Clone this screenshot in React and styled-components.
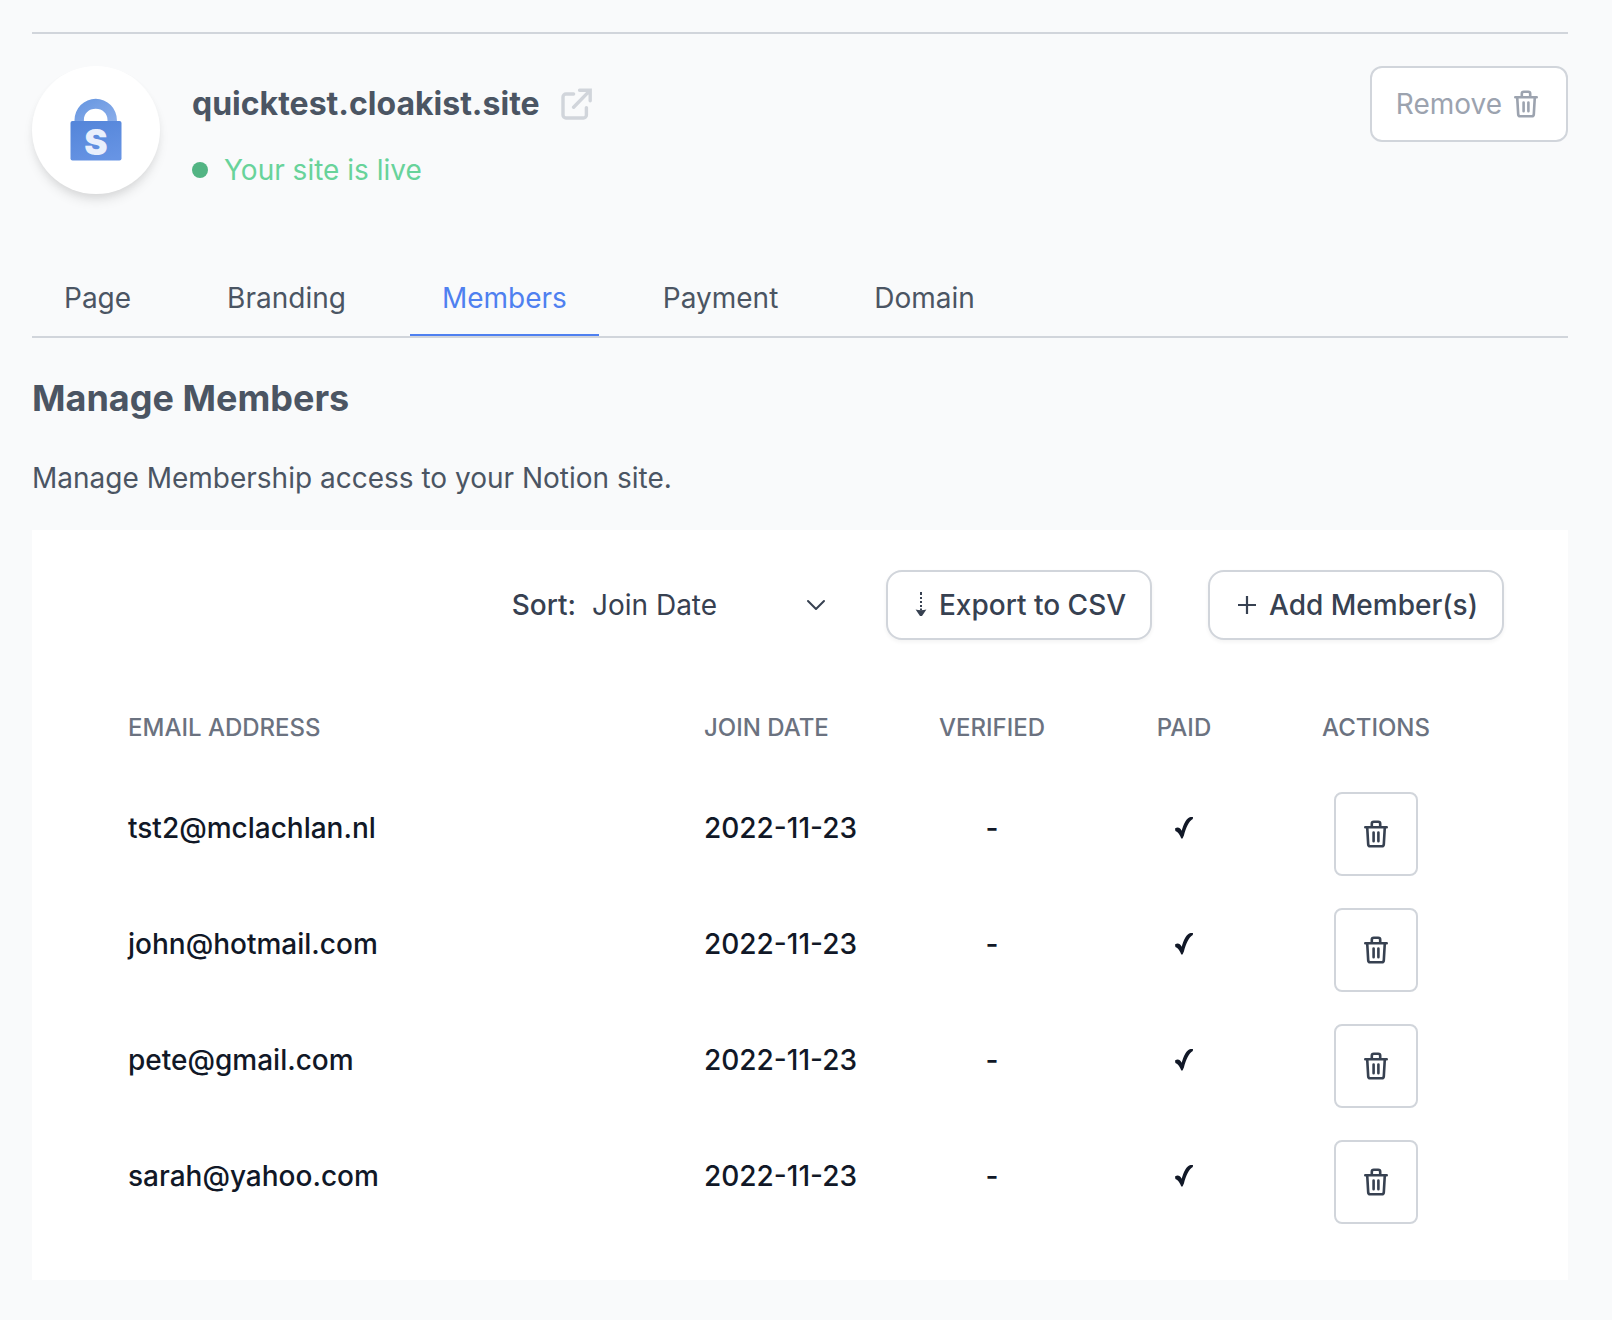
import { useState } from "react";
import styled, { createGlobalStyle } from "styled-components";

const GlobalStyle = createGlobalStyle`
  *, *::before, *::after {
    box-sizing: border-box;
  }
  body {
    margin: 0;
    background: #f9fafb;
    color: #4b5563;
    font-family: Inter, "Liberation Sans", sans-serif;
    font-size: 28px;
    line-height: 40px;
    font-optical-sizing: none;
  }
  button, select {
    font-family: inherit;
    font-size: inherit;
    line-height: inherit;
  }
`;

const Page = styled.div`
  padding: 32px 44px 40px 32px;
`;

const SiteHeader = styled.header`
  display: flex;
  align-items: flex-start;
  gap: 32px;
  padding: 32px 0 64px;
  border-top: 2px solid #d1d5db;
`;

const Avatar = styled.div`
  display: flex;
  align-items: center;
  justify-content: center;
  width: 128px;
  height: 128px;
  border-radius: 50%;
  background: #fff;
  box-shadow: 0 8px 12px -2px rgba(0, 0, 0, 0.1), 0 4px 8px -2px rgba(0, 0, 0, 0.06);
`;

const SiteInfo = styled.div`
  display: flex;
  flex: 1;
  flex-direction: column;
  gap: 26px;
  padding-top: 18px;
`;

const SiteName = styled.h1`
  display: flex;
  align-items: center;
  gap: 20px;
  margin: 0;
  font-size: 32px;
  font-weight: 700;
`;

const IconLink = styled.a`
  display: flex;
  color: #d1d5db;
`;

const Status = styled.p`
  display: flex;
  align-items: center;
  gap: 16px;
  margin: 0;
  color: #68d39a;
`;

const Dot = styled.span`
  width: 16px;
  height: 16px;
  border-radius: 50%;
  background: #52b483;
`;

const RemoveButton = styled.button`
  display: flex;
  align-items: center;
  gap: 12px;
  height: 76px;
  padding: 0 28px 0 24px;
  border: 2px solid #d1d5db;
  border-radius: 12px;
  background: #fff;
  color: #9ca3af;
  cursor: pointer;
`;

const Tabs = styled.nav`
  display: flex;
  gap: 32px;
  border-bottom: 2px solid #d1d5db;
`;

const Tab = styled.a`
  padding: 20px 32px 16px;
  border-bottom: 2px solid ${(props) => (props.$active ? "#4f80f0" : "transparent")};
  color: ${(props) => (props.$active ? "#4f80f0" : "#4b5563")};
  text-decoration: none;
`;

const Title = styled.h2`
  margin: 40px 0;
  font-size: 36px;
  font-weight: 700;
`;

const Description = styled.p`
  margin: 0 0 32px;
`;

const Card = styled.section`
  padding: 40px 64px 46px;
  background: #fff;
`;

const Toolbar = styled.div`
  display: flex;
  align-items: center;
  justify-content: flex-end;
  gap: 56px;
`;

const SortField = styled.div`
  display: flex;
  align-items: center;
  gap: 16px;
  color: #374151;
`;

const SortLabel = styled.label`
  font-weight: 500;
`;

const SelectWrap = styled.div`
  display: grid;
  align-items: center;
  width: 238px;
  > * {
    grid-area: 1 / 1;
  }
  svg {
    justify-self: end;
    margin-right: 4px;
    pointer-events: none;
  }
`;

const Select = styled.select`
  width: 100%;
  padding: 0;
  border: 0;
  appearance: none;
  background: transparent;
  color: inherit;
`;

const ToolbarButton = styled.button`
  display: flex;
  align-items: center;
  gap: 12px;
  height: 70px;
  padding: 0 24px 0 27px;
  border: 2px solid #d1d5db;
  border-radius: 16px;
  background: #fff;
  box-shadow: 0 2px 4px rgba(0, 0, 0, 0.05);
  color: #374151;
  font-weight: 500;
  cursor: pointer;
`;

const Table = styled.table`
  width: 100%;
  margin-top: 48px;
  border-collapse: collapse;
  table-layout: fixed;
  color: #111827;
  font-weight: 500;
`;

const HeadCell = styled.th`
  width: ${(props) => props.$width || "auto"};
  height: 82px;
  padding: 0 0 2px ${(props) => (props.$center ? "0" : "32px")};
  color: #6b7280;
  font-size: 24px;
  font-weight: 500;
  line-height: 32px;
  text-align: ${(props) => (props.$center ? "center" : "left")};
  text-transform: uppercase;
`;

const Cell = styled.td`
  height: 116px;
  padding: 0 0 0 ${(props) => (props.$center ? "0" : "32px")};
  text-align: ${(props) => (props.$center ? "center" : "left")};
  > svg {
    display: block;
    margin: 0 auto;
  }
`;

const DeleteButton = styled.button`
  display: flex;
  align-items: center;
  justify-content: center;
  width: 84px;
  height: 84px;
  margin: 22px auto 10px;
  padding: 0;
  border: 2px solid #d1d5db;
  border-radius: 8px;
  background: #fff;
  color: #374151;
  cursor: pointer;
`;

const members = [
  { email: "tst2@mclachlan.nl", joined: "2022-11-23", verified: false, paid: true },
  { email: "john@hotmail.com", joined: "2022-11-23", verified: false, paid: true },
  { email: "pete@gmail.com", joined: "2022-11-23", verified: false, paid: true },
  { email: "sarah@yahoo.com", joined: "2022-11-23", verified: false, paid: true },
];

const tabs = ["Page", "Branding", "Members", "Payment", "Domain"];

const TrashIcon = () => (
  <svg width="24" height="28" viewBox="0 0 24 28" fill="none" stroke="currentColor" strokeWidth="2.6" strokeLinecap="round" strokeLinejoin="round" aria-hidden="true">
    <path d="M1.3 7.2h21.4M3.2 7.2l1 17.2a2 2 0 0 0 2 1.9h11.6a2 2 0 0 0 2-1.9l1-17.2M7.8 7V3.7a2 2 0 0 1 2-2h4.4a2 2 0 0 1 2 2V7" />
    <path d="M9.6 12.6v8.6M14.4 12.6v8.6" />
  </svg>
);

const ExternalIcon = () => (
  <svg width="32" height="32" viewBox="0 0 32 32" fill="none" stroke="currentColor" strokeWidth="3.4" strokeLinecap="round" strokeLinejoin="round" aria-hidden="true">
    <path d="M13.6 6H6a3 3 0 0 0-3 3v18a3 3 0 0 0 3 3h17.400a3 3 0 0 0 3-3v-7.400" />
    <path d="M19.600 2.200h10.600v10.600M29.800 2.600L13.600 19.200" strokeLinejoin="miter" />
  </svg>
);

const ChevronIcon = () => (
  <svg width="20" height="12" viewBox="0 0 20 12" fill="none" stroke="currentColor" strokeWidth="2" strokeLinecap="round" strokeLinejoin="round" aria-hidden="true">
    <path d="M2 2l8 8 8-8" />
  </svg>
);

const DownloadIcon = () => (
  <svg width="12" height="26" viewBox="0 0 12 26" fill="currentColor" aria-hidden="true">
    <path d="M5 0h2v3H5zM5 5h2v2H5zM5 9h2v2H5zM5 13h2v2H5zM5 16.5h2v2H5z" />
    <path d="M.6 17.6c3 .8 7.800.8 10.800 0L7 24H5z" />
  </svg>
);

const PlusIcon = () => (
  <svg width="20" height="20" viewBox="0 0 20 20" fill="none" stroke="currentColor" strokeWidth="2.2" aria-hidden="true">
    <path d="M10 1v18M1 10h18" />
  </svg>
);

const CheckIcon = () => (
  <svg width="18" height="22" viewBox="0 0 18 22" fill="currentColor" role="img" aria-label="Yes">
    <path d="M0 11.600C2.400 9.600 4.900 10.200 6.700 13.800 8.600 7 11.600.8 15.600.1L18 0 17.800 1.900C14 3.900 11.100 10.400 8.900 18.400L7.500 21.600H6.300C5 17.800 3 14.600.4 13.900z" />
  </svg>
);

const LockLogo = () => (
  <svg width="52" height="76" viewBox="0 -7 52 76" role="img" aria-label="Cloakist">
    <defs>
      <linearGradient id="shackle" x1="0" y1="0" x2="1" y2="1">
        <stop offset="0" stopColor="#6495e0" />
        <stop offset="1" stopColor="#8caeea" />
      </linearGradient>
      <linearGradient id="body" x1="0.3" y1="0" x2="0.7" y2="1">
        <stop offset="0" stopColor="#5586da" />
        <stop offset="1" stopColor="#6794e4" />
      </linearGradient>
    </defs>
    <path d="M4.5 24V21a21.2 21.2 0 0 1 42.4 0v3H37.5V21c0-6.5-5-11.2-11.8-11.2S13.9 14.5 13.9 21v3z" fill="url(#shackle)" />
    <rect x="0.5" y="22" width="51" height="39.5" rx="2" fill="url(#body)" />
    <text x="26" y="56" textAnchor="middle" fill="#e9effc" fontFamily="Inter, sans-serif" fontSize="35" fontWeight="900">S</text>
  </svg>
);

export default function App() {
  const [activeTab, setActiveTab] = useState("Members");
  const [sort, setSort] = useState("joined");

  return (
    <Page>
      <GlobalStyle />
      <SiteHeader>
        <Avatar>
          <LockLogo />
        </Avatar>
        <SiteInfo>
          <SiteName>
            quicktest.cloakist.site
            <IconLink href="#site" aria-label="Open site">
              <ExternalIcon />
            </IconLink>
          </SiteName>
          <Status>
            <Dot />
            Your site is live
          </Status>
        </SiteInfo>
        <RemoveButton type="button">
          Remove
          <TrashIcon />
        </RemoveButton>
      </SiteHeader>
      <Tabs>
        {tabs.map((tab) => (
          <Tab key={tab} href={`#${tab.toLowerCase()}`} $active={tab === activeTab} onClick={() => setActiveTab(tab)}>
            {tab}
          </Tab>
        ))}
      </Tabs>
      <main>
        <Title>Manage Members</Title>
        <Description>Manage Membership access to your Notion site.</Description>
        <Card>
          <Toolbar>
            <SortField>
              <SortLabel htmlFor="sort">Sort:</SortLabel>
              <SelectWrap>
                <Select id="sort" value={sort} onChange={(e) => setSort(e.target.value)}>
                  <option value="joined">Join Date</option>
                  <option value="email">Email</option>
                </Select>
                <ChevronIcon />
              </SelectWrap>
            </SortField>
            <ToolbarButton type="button">
              <DownloadIcon />
              Export to CSV
            </ToolbarButton>
            <ToolbarButton type="button">
              <PlusIcon />
              Add Member(s)
            </ToolbarButton>
          </Toolbar>
          <Table>
            <thead>
              <tr>
                <HeadCell>Email Address</HeadCell>
                <HeadCell $width="192px">Join Date</HeadCell>
                <HeadCell $width="256px" $center>Verified</HeadCell>
                <HeadCell $width="128px" $center>Paid</HeadCell>
                <HeadCell $width="256px" $center>Actions</HeadCell>
              </tr>
            </thead>
            <tbody>
              {members.map((member) => (
                <tr key={member.email}>
                  <Cell>{member.email}</Cell>
                  <Cell>{member.joined}</Cell>
                  <Cell $center>{member.verified ? <CheckIcon /> : "-"}</Cell>
                  <Cell $center>{member.paid ? <CheckIcon /> : "-"}</Cell>
                  <Cell $center>
                    <DeleteButton type="button" aria-label={`Delete ${member.email}`}>
                      <TrashIcon />
                    </DeleteButton>
                  </Cell>
                </tr>
              ))}
            </tbody>
          </Table>
        </Card>
      </main>
    </Page>
  );
}
